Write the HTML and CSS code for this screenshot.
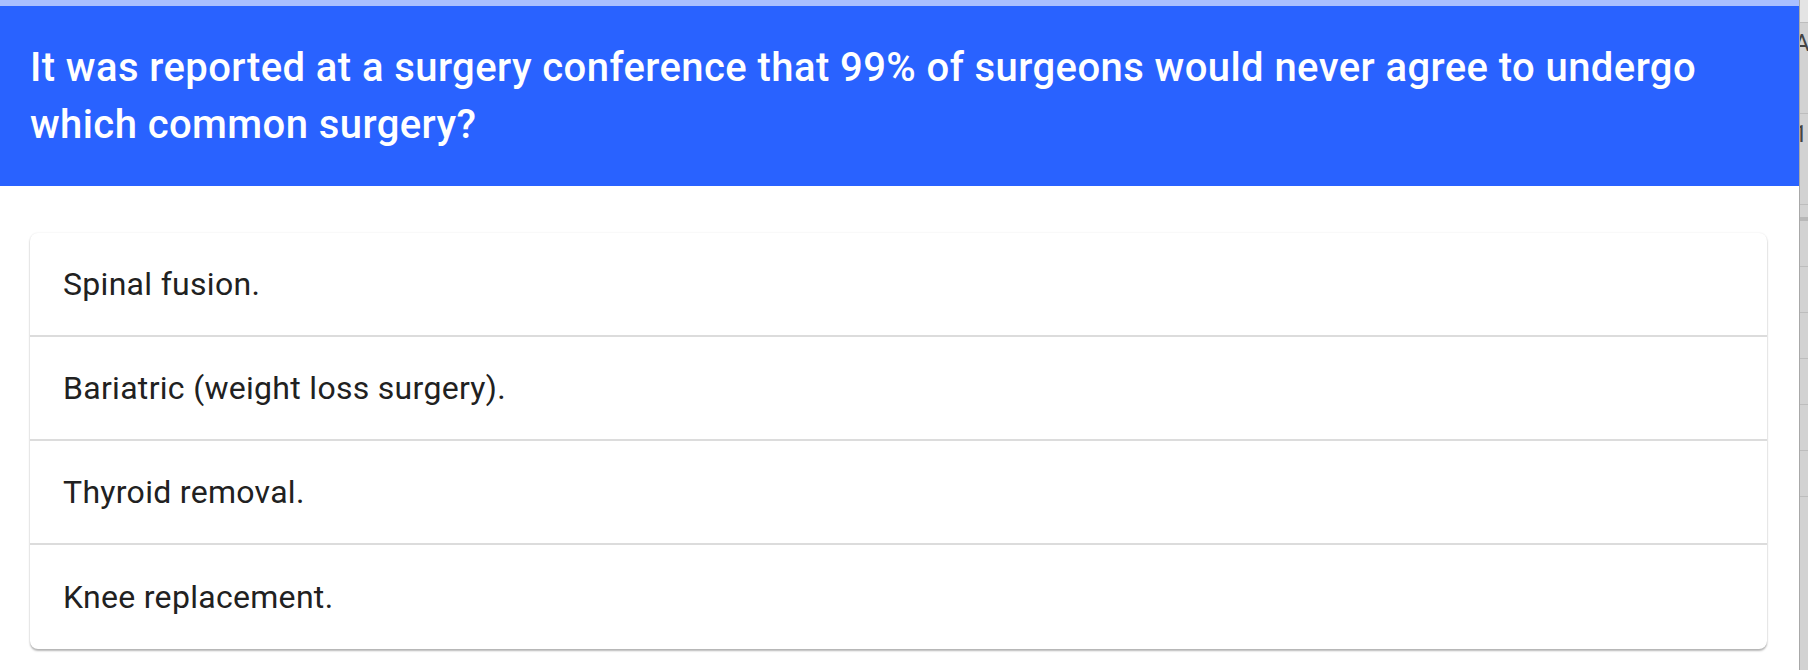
FILE: index.html
```html
<!DOCTYPE html>
<html lang="en">

<head>
    <meta charset="UTF-8">
    <meta name="viewport" content="width=device-width, initial-scale=1.0">
    <title>Quiz Question</title>
    <link rel="stylesheet" href="styles.css">
</head>

<body>
    <div class="page">
        <div class="quiz">
            <div class="top-strip"></div>
            <h1 class="question">It was reported at a surgery conference that 99% of surgeons would never agree to undergo which common surgery?</h1>
            <ul class="answers">
                <li class="answer">Spinal fusion.</li>
                <li class="answer">Bariatric (weight loss surgery).</li>
                <li class="answer">Thyroid removal.</li>
                <li class="answer">Knee replacement.</li>
            </ul>
        </div>
        <div class="side">
            <div class="side-row side-first"></div>
            <div class="side-row side-tall"><span>A</span></div>
            <div class="side-row side-tall"><span>1</span></div>
            <div class="side-row side-thin"></div>
            <div class="side-row"></div>
            <div class="side-row"></div>
            <div class="side-row"></div>
            <div class="side-row"></div>
            <div class="side-row"></div>
            <div class="side-row"></div>
        </div>
    </div>
</body>

</html>
```

FILE: styles.css
```css
body {
    margin: 0;
    font-family: Roboto, "Noto Sans", sans-serif;
    background-color: #fff;
}

.page {
    display: flex;
    height: 670px;
    overflow: hidden;
}

.quiz {
    flex: 1;
}

.top-strip {
    height: 6px;
    background-color: #a9bfff;
}

.question {
    margin: 0;
    padding: 33px 28px 33px 30px;
    background-color: #2962ff;
    color: #fff;
    font-size: 40px;
    font-weight: 500;
    line-height: 57px;
    letter-spacing: 0.42px;
}

.answers {
    list-style: none;
    margin: 47px 32px 0 30px;
    padding: 0;
    border-radius: 8px;
    background-color: #fff;
    box-shadow: 0 2px 2px rgba(0, 0, 0, 0.28), 0 0 2px rgba(0, 0, 0, 0.1);
}

.answer {
    height: 104px;
    box-sizing: border-box;
    display: flex;
    align-items: center;
    padding: 0 33px;
    font-size: 32px;
    letter-spacing: 0.3px;
    color: #212121;
    border-bottom: 2px solid #dcdcdc;
}

.answer:last-child {
    border-bottom: none;
}

.side {
    width: 8px;
    background-color: #d2d2d2;
    border-left: 1px solid #a8a8a8;
    overflow: hidden;
}

.side-row {
    height: 45px;
    border-bottom: 1px solid #bdbdbd;
    font-size: 24px;
    color: #444;
    line-height: 40px;
}

.side-first {
    height: 22px;
    background-color: #e4e4e4;
}

.side-tall {
    height: 90px;
}

.side-thin {
    height: 12px;
    border-bottom: 4px solid #b8b8b8;
}

.side-row span {
    display: block;
    margin-left: -6px;
}
```
